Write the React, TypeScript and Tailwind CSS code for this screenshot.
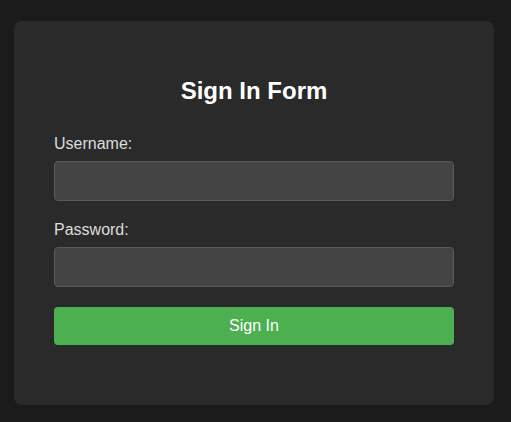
const App = () => {
  return (
    <div className="min-h-screen w-full bg-[#1b1b1b] pt-[21px] pl-[14px] font-['Liberation_Sans',Arial,sans-serif]">
      <form
        className="w-[480px] rounded-lg bg-[#2a2a2a] px-10 pt-14 pb-[60px]"
        onSubmit={(e) => e.preventDefault()}
      >
        <h2 className="text-center text-2xl leading-[28px] font-bold text-white mb-[29px]">
          Sign In Form
        </h2>

        <div className="mb-[19px]">
          <label htmlFor="username" className="block text-base leading-[19px] text-[#dddddd] mb-2">
            Username:
          </label>
          <input
            id="username"
            type="text"
            className="block h-10 w-full rounded border border-[#5a5a5a] bg-[#444444] px-3 text-white outline-none"
          />
        </div>

        <div className="mb-5">
          <label htmlFor="password" className="block text-base leading-[19px] text-[#dddddd] mb-2">
            Password:
          </label>
          <input
            id="password"
            type="password"
            className="block h-10 w-full rounded border border-[#5a5a5a] bg-[#444444] px-3 text-white outline-none"
          />
        </div>

        <button
          type="submit"
          className="block h-[38px] w-full rounded bg-[#4caf50] text-base text-white"
        >
          Sign In
        </button>
      </form>
    </div>
  );
};

export default App;
